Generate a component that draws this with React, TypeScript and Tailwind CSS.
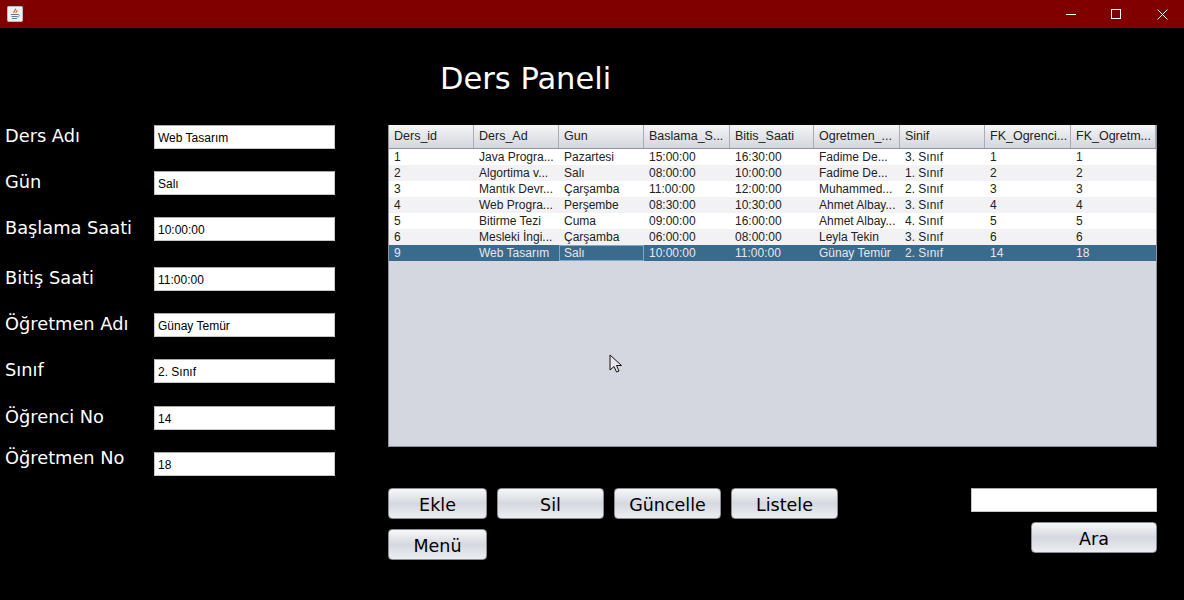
const fields = [
  { label: "Ders Adı", value: "Web Tasarım", top: "mt-0", shift: "-translate-y-px" },
  { label: "Gün", value: "Salı", top: "mt-[22px]", shift: "-translate-y-px" },
  { label: "Başlama Saati", value: "10:00:00", top: "mt-[22px]", shift: "-translate-y-px" },
  { label: "Bitiş Saati", value: "11:00:00", top: "mt-[26px]", shift: "-translate-y-px" },
  { label: "Öğretmen Adı", value: "Günay Temür", top: "mt-[22px]", shift: "-translate-y-px" },
  { label: "Sınıf", value: "2. Sınıf", top: "mt-[22px]", shift: "-translate-y-px" },
  { label: "Öğrenci No", value: "14", top: "mt-[23px]", shift: "-translate-y-px" },
  { label: "Öğretmen No", value: "18", top: "mt-[22px]", shift: "-translate-y-[6px]" },
];

const columns = ["Ders_id", "Ders_Ad", "Gun", "Baslama_S...", "Bitis_Saati", "Ogretmen_...", "Sinif", "FK_Ogrenci...", "FK_Ogretm..."];

const rows = [
  ["1", "Java Progra...", "Pazartesi", "15:00:00", "16:30:00", "Fadime De...", "3. Sınıf", "1", "1"],
  ["2", "Algortima v...", "Salı", "08:00:00", "10:00:00", "Fadime De...", "1. Sınıf", "2", "2"],
  ["3", "Mantık Devr...", "Çarşamba", "11:00:00", "12:00:00", "Muhammed...", "2. Sınıf", "3", "3"],
  ["4", "Web Progra...", "Perşembe", "08:30:00", "10:30:00", "Ahmet Albay...", "3. Sınıf", "4", "4"],
  ["5", "Bitirme Tezi", "Cuma", "09:00:00", "16:00:00", "Ahmet Albay...", "4. Sınıf", "5", "5"],
  ["6", "Mesleki İngi...", "Çarşamba", "06:00:00", "08:00:00", "Leyla Tekin", "3. Sınıf", "6", "6"],
  ["9", "Web Tasarım", "Salı", "10:00:00", "11:00:00", "Günay Temür", "2. Sınıf", "14", "18"],
];

function JavaButton({ children, width }: { children: string; width: string }) {
  return (
    <button
      className={`${width} h-[31px] pt-[3px] rounded-[4px] border border-[#8a8d94] bg-gradient-to-b from-[#f8f8f9] via-[#d5d8e0] to-[#eceef1] font-['DejaVu_Sans',sans-serif] text-[17.5px] text-black`}
    >
      {children}
    </button>
  );
}

function JavaIcon() {
  return (
    <svg width="16" height="16" viewBox="0 0 16 16" className="ml-[7px]">
      <rect x="0.5" y="0.5" width="15" height="15" rx="1" fill="#f1f1f3" stroke="#b9b9c0" />
      <path d="M8.500 2.500c1 1.500-2.500 2.500-1.500 4.500M10 4c.5 1-1.500 2-.8 3" fill="none" stroke="#e07020" strokeWidth="1.2" />
      <path d="M4 8.500h7M4.500 10.500h6M5 12.500h5" stroke="#5a7f9e" strokeWidth="1.1" />
      <path d="M11 8.500c2 0 2 2-.5 2.500" fill="none" stroke="#5a7f9e" strokeWidth="0.9" />
    </svg>
  );
}

export default function App() {
  return (
    <div className="w-[1184px] h-[600px] bg-black flex flex-col overflow-hidden relative font-['Liberation_Sans',sans-serif]">
      <div className="h-7 shrink-0 bg-[#800000] flex items-center justify-between">
        <JavaIcon />
        <div className="flex items-center text-white">
          <div className="w-[42px] h-7 flex items-center justify-center">
            <svg width="10" height="10" viewBox="0 0 10 10"><path d="M0 5.500h10" stroke="#fff" strokeWidth="1" /></svg>
          </div>
          <div className="w-[48px] h-7 flex items-center justify-center">
            <svg width="10" height="10" viewBox="0 0 10 10"><rect x="0.5" y="0.5" width="9" height="9" fill="none" stroke="#fff" strokeWidth="1" /></svg>
          </div>
          <div className="w-[44px] h-7 flex items-center justify-center">
            <svg width="11" height="11" viewBox="0 0 11 11"><path d="M.5.5l10 10M10.500.5l-10 10" stroke="#fff" strokeWidth="1" /></svg>
          </div>
        </div>
      </div>

      <div className="h-[97px] shrink-0 pl-[440px] pt-[29px]">
        <h1 className="font-['DejaVu_Sans',sans-serif] text-[30.5px] leading-[44px] text-white">Ders Paneli</h1>
      </div>

      <div className="flex">
        <div className="w-[388px] shrink-0 pl-[5px] flex flex-col">
          {fields.map((f) => (
            <div key={f.label} className={`flex h-[24px] ${f.top}`}>
              <div className={`w-[149px] font-['DejaVu_Sans',sans-serif] text-[17.8px] leading-[24px] text-white whitespace-nowrap ${f.shift}`}>
                {f.label}
              </div>
              <div className="w-[181px] h-[24px] bg-white border border-[#c8c8c8] border-t-[#a9a9a9] pl-[3px] text-[12px] leading-[24px] text-black">
                {f.value}
              </div>
            </div>
          ))}
        </div>

        <div className="w-[769px] flex flex-col">
          <div className="h-[322px] bg-[#d4d7e0] border border-[#8f939c] border-t-0">
            <div className="grid grid-cols-[85px_85px_85px_86px_84px_86px_85px_86px_1fr] h-[24px] border-b border-[#8f939c] bg-gradient-to-b from-[#f5f5f6] to-[#d3d6dd]">
              {columns.map((c) => (
                <div key={c} className="px-[5px] text-[12.5px] leading-[23px] text-[#222] border-r border-[#a9acb4] whitespace-nowrap overflow-hidden">
                  {c}
                </div>
              ))}
            </div>
            {rows.map((r, i) => (
              <div
                key={r[0]}
                className={`grid grid-cols-[85px_85px_85px_86px_84px_86px_85px_86px_1fr] h-[16px] text-[12px] leading-[16px] ${
                  i === 6 ? "bg-[#3a6a8c] text-[#e4e8ee]" : i % 2 === 0 ? "bg-white text-[#222]" : "bg-[#f2f2f5] text-[#222]"
                }`}
              >
                {r.map((cell, j) => (
                  <div
                    key={j}
                    className={`px-[5px] whitespace-nowrap overflow-hidden ${i === 6 && j === 2 ? "border border-[#7fa8c9] leading-[14px] pl-[4px]" : ""}`}
                  >
                    {cell}
                  </div>
                ))}
              </div>
            ))}
          </div>

          <div className="flex justify-between mt-[41px]">
            <div className="flex flex-col gap-[10px]">
              <div className="flex gap-[10px]">
                <JavaButton width="w-[99px]">Ekle</JavaButton>
                <JavaButton width="w-[107px]">Sil</JavaButton>
                <JavaButton width="w-[107px]">Güncelle</JavaButton>
                <JavaButton width="w-[107px]">Listele</JavaButton>
              </div>
              <JavaButton width="w-[99px]">Menü</JavaButton>
            </div>
            <div className="flex flex-col items-end gap-[10px]">
              <div className="w-[186px] h-[24px] bg-white border border-[#c8c8c8] border-t-[#a9a9a9]" />
              <JavaButton width="w-[126px]">Ara</JavaButton>
            </div>
          </div>
        </div>
      </div>

      <svg width="14" height="20" viewBox="0 0 14 20" className="absolute left-[609px] top-[354px]">
        <path d="M1 1v15l4-3.500 2.500 5.500 2.500-1-2.500-5.500h5z" fill="#e8e8ec" stroke="#111" strokeWidth="1" />
      </svg>
    </div>
  );
}
